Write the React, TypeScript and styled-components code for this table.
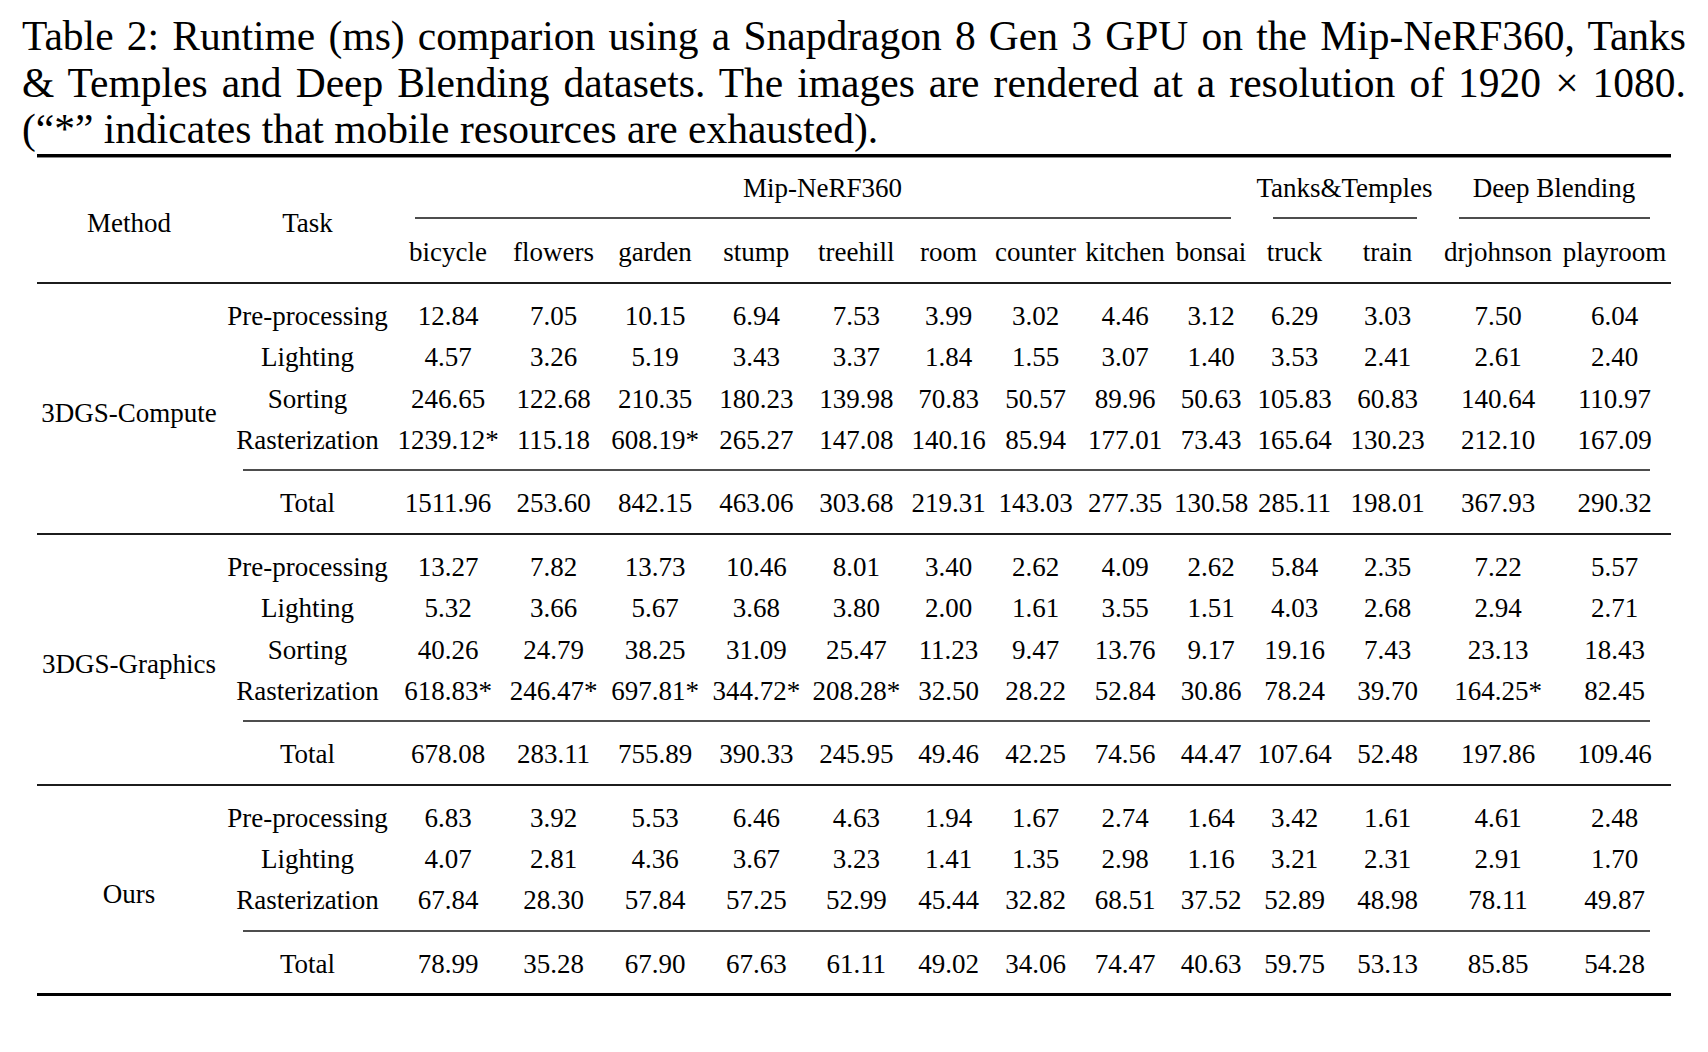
import React from "react";
import styled, { createGlobalStyle } from "styled-components";

const COLS = [185, 172, 109, 102, 101, 101.5, 98.5, 86, 88, 91, 81, 86, 100, 121, 112];
const HEAD_COLS = COLS.map((w) => `${w}px`).join(" ");
const BODY_COLS = COLS.slice(1).map((w) => `${w}px`).join(" ");
const ROW_H = 41.4;

const GlobalStyle = createGlobalStyle`
  html, body { margin: 0; padding: 0; background: #ffffff; }
  body {
    font-family: "Liberation Serif", "Times New Roman", Times, serif;
    color: #000000;
  }
`;

const Page = styled.main`
  width: 1708px;
  box-sizing: border-box;
  padding: 13px 22px 0 22px;
`;

const Caption = styled.div`
  width: 1664px;
  font-size: 41.5px;
  line-height: 46.5px;
`;

const CaptionLine = styled.div<{ $justify?: boolean }>`
  text-align: ${(p) => (p.$justify ? "justify" : "left")};
  text-align-last: ${(p) => (p.$justify ? "justify" : "left")};
`;

const Table = styled.div`
  margin: 1.5px 0 0 14.5px;
  width: 1634px;
  font-size: 27px;
  line-height: ${ROW_H}px;
`;

const Rule = styled.div<{ $heavy?: boolean }>`
  height: ${(p) => (p.$heavy ? 3 : 2)}px;
  background: ${(p) => (p.$heavy ? "#000" : "#1c1c1c")};
  box-shadow: ${(p) => (p.$heavy ? "0 1px 0 #8a8a8a" : "none")};
`;

const CmidRule = styled.div`
  height: 2px;
  margin: 0 21px;
  background: #4d4d4d;
`;

const HeaderGrid = styled.div`
  display: grid;
  grid-template-columns: ${HEAD_COLS};
  grid-template-rows: ${ROW_H}px 23px ${ROW_H}px;
  padding: 11px 0 8px;
`;

const SpanHead = styled.div<{ $col: number }>`
  grid-column: ${(p) => p.$col};
  grid-row: 1 / 4;
  align-self: center;
  padding-top: 6px;
  text-align: center;
  white-space: nowrap;
`;

const GroupLabel = styled.div<{ $from: number; $to: number }>`
  grid-column: ${(p) => p.$from} / ${(p) => p.$to};
  grid-row: 1;
  text-align: center;
  white-space: nowrap;
`;

const GroupRule = styled.div<{ $from: number; $to: number }>`
  grid-column: ${(p) => p.$from} / ${(p) => p.$to};
  grid-row: 2;
  align-self: start;
  height: 2px;
  margin: 8px 21px 0;
  background: #4d4d4d;
`;

const ColName = styled.div<{ $col: number }>`
  grid-column: ${(p) => p.$col};
  grid-row: 3;
  text-align: center;
  white-space: nowrap;
`;

const MethodBlock = styled.section`
  display: grid;
  grid-template-columns: ${COLS[0]}px 1fr;
`;

const MethodLabel = styled.div`
  align-self: center;
  padding-top: 10px;
  text-align: center;
  white-space: nowrap;
`;

const BlockBody = styled.div`
  display: flex;
  flex-direction: column;
`;

const RowsGrid = styled.div`
  display: grid;
  grid-template-columns: ${BODY_COLS};
  grid-auto-rows: ${ROW_H}px;
  padding: 12px 0 8px;
`;

const Cell = styled.div`
  text-align: center;
  white-space: nowrap;
`;

const SCENES = [
  "bicycle", "flowers", "garden", "stump", "treehill", "room", "counter",
  "kitchen", "bonsai", "truck", "train", "drjohnson", "playroom",
];

type Row = [string, string[]];

interface Block {
  method: string;
  rows: Row[];
  total: string[];
}

const s = (t: string) => t.split(" ");

const BLOCKS: Block[] = [
  {
    method: "3DGS-Compute",
    rows: [
      ["Pre-processing", s("12.84 7.05 10.15 6.94 7.53 3.99 3.02 4.46 3.12 6.29 3.03 7.50 6.04")],
      ["Lighting", s("4.57 3.26 5.19 3.43 3.37 1.84 1.55 3.07 1.40 3.53 2.41 2.61 2.40")],
      ["Sorting", s("246.65 122.68 210.35 180.23 139.98 70.83 50.57 89.96 50.63 105.83 60.83 140.64 110.97")],
      ["Rasterization", s("1239.12* 115.18 608.19* 265.27 147.08 140.16 85.94 177.01 73.43 165.64 130.23 212.10 167.09")],
    ],
    total: s("1511.96 253.60 842.15 463.06 303.68 219.31 143.03 277.35 130.58 285.11 198.01 367.93 290.32"),
  },
  {
    method: "3DGS-Graphics",
    rows: [
      ["Pre-processing", s("13.27 7.82 13.73 10.46 8.01 3.40 2.62 4.09 2.62 5.84 2.35 7.22 5.57")],
      ["Lighting", s("5.32 3.66 5.67 3.68 3.80 2.00 1.61 3.55 1.51 4.03 2.68 2.94 2.71")],
      ["Sorting", s("40.26 24.79 38.25 31.09 25.47 11.23 9.47 13.76 9.17 19.16 7.43 23.13 18.43")],
      ["Rasterization", s("618.83* 246.47* 697.81* 344.72* 208.28* 32.50 28.22 52.84 30.86 78.24 39.70 164.25* 82.45")],
    ],
    total: s("678.08 283.11 755.89 390.33 245.95 49.46 42.25 74.56 44.47 107.64 52.48 197.86 109.46"),
  },
  {
    method: "Ours",
    rows: [
      ["Pre-processing", s("6.83 3.92 5.53 6.46 4.63 1.94 1.67 2.74 1.64 3.42 1.61 4.61 2.48")],
      ["Lighting", s("4.07 2.81 4.36 3.67 3.23 1.41 1.35 2.98 1.16 3.21 2.31 2.91 1.70")],
      ["Rasterization", s("67.84 28.30 57.84 57.25 52.99 45.44 32.82 68.51 37.52 52.89 48.98 78.11 49.87")],
    ],
    total: s("78.99 35.28 67.90 67.63 61.11 49.02 34.06 74.47 40.63 59.75 53.13 85.85 54.28"),
  },
];

const GROUPS = [
  { label: "Mip-NeRF360", from: 3, to: 12 },
  { label: "Tanks&Temples", from: 12, to: 14 },
  { label: "Deep Blending", from: 14, to: 16 },
];

const DataRow: React.FC<{ task: string; values: string[] }> = ({ task, values }) => (
  <>
    <Cell>{task}</Cell>
    {values.map((v, i) => (
      <Cell key={i}>{v}</Cell>
    ))}
  </>
);

export default function App() {
  return (
    <>
      <GlobalStyle />
      <Page>
        <Caption>
          <CaptionLine $justify>
            Table 2: Runtime (ms) comparion using a Snapdragon 8 Gen 3 GPU on the Mip-NeRF360, Tanks
          </CaptionLine>
          <CaptionLine $justify>
            &amp; Temples and Deep Blending datasets. The images are rendered at a resolution of 1920 × 1080.
          </CaptionLine>
          <CaptionLine>(“*” indicates that mobile resources are exhausted).</CaptionLine>
        </Caption>
        <Table>
          <Rule $heavy />
          <HeaderGrid>
            <SpanHead $col={1}>Method</SpanHead>
            <SpanHead $col={2}>Task</SpanHead>
            {GROUPS.map((g) => (
              <GroupLabel key={g.label} $from={g.from} $to={g.to}>
                {g.label}
              </GroupLabel>
            ))}
            {GROUPS.map((g) => (
              <GroupRule key={g.label} $from={g.from} $to={g.to} />
            ))}
            {SCENES.map((name, i) => (
              <ColName key={name} $col={i + 3}>
                {name}
              </ColName>
            ))}
          </HeaderGrid>
          {BLOCKS.map((b, bi) => (
            <React.Fragment key={b.method}>
              <Rule $heavy={false} />
              <MethodBlock>
                <MethodLabel>{b.method}</MethodLabel>
                <BlockBody>
                  <RowsGrid>
                    {b.rows.map(([task, values]) => (
                      <DataRow key={task} task={task} values={values} />
                    ))}
                  </RowsGrid>
                  <CmidRule />
                  <RowsGrid>
                    <DataRow task="Total" values={b.total} />
                  </RowsGrid>
                </BlockBody>
              </MethodBlock>
              {bi === BLOCKS.length - 1 && <Rule $heavy />}
            </React.Fragment>
          ))}
        </Table>
      </Page>
    </>
  );
}
